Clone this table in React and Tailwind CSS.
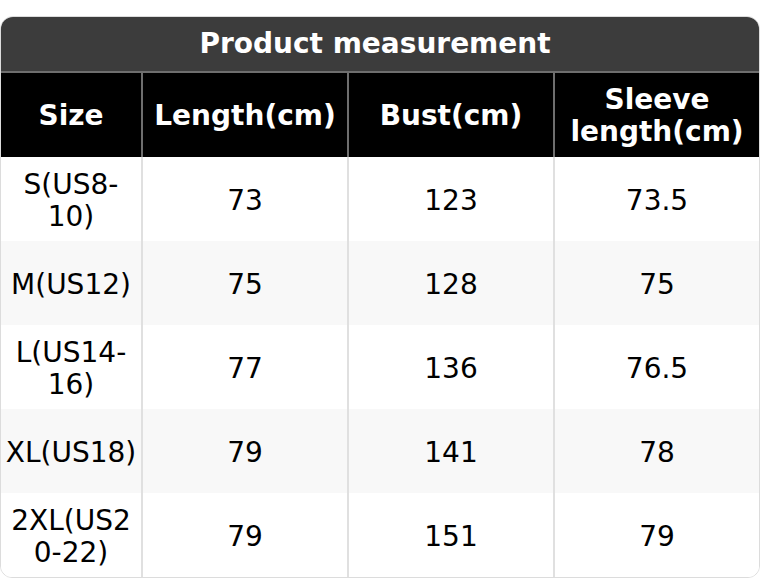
import React from "react";

const rows = [
  ["S(US8-10)", "73", "123", "73.5"],
  ["M(US12)", "75", "128", "75"],
  ["L(US14-16)", "77", "136", "76.5"],
  ["XL(US18)", "79", "141", "78"],
  ["2XL(US20-22)", "79", "151", "79"],
];

const headers = ["Size", "Length(cm)", "Bust(cm)", "Sleeve length(cm)"];

export default function App() {
  return (
    <div className="w-[760px] h-[580px] bg-white pt-4 font-['DejaVu_Sans',sans-serif]">
      <div className="rounded-t-[13px] rounded-b-[12px] overflow-hidden border border-[#dcdcdc]">
        <div className="h-[56px] bg-[#3c3c3c] flex items-center justify-center pr-[10px] text-white font-bold text-[28px] leading-none border-b-2 border-[#6e6e6e]">
          Product measurement
        </div>

        <div className="grid grid-cols-[140px_206px_206px_1fr] bg-black">
          {headers.map((h, i) => (
            <div
              key={h}
              className={
                "h-[84px] pt-[2px] flex items-center justify-center text-center px-1 text-white font-bold text-[28px] leading-[32px] " +
                (i > 0 ? "border-l-2 border-[#6e6e6e]" : "")
              }
            >
              {h}
            </div>
          ))}
        </div>

        {rows.map((row, r) => (
          <div
            key={r}
            className={
              "grid grid-cols-[140px_206px_206px_1fr] " +
              (r % 2 === 1 ? "bg-[#f8f8f8]" : "bg-white")
            }
          >
            {row.map((cell, i) => (
              <div
                key={i}
                className={
                  "h-[84px] pt-[3px] flex items-center justify-center text-center px-1 text-black text-[28px] leading-[32px] [overflow-wrap:anywhere] " +
                  (i > 0 ? "border-l-2 border-[#e0e0e0]" : "")
                }
              >
                {cell}
              </div>
            ))}
          </div>
        ))}
      </div>
    </div>
  );
}
